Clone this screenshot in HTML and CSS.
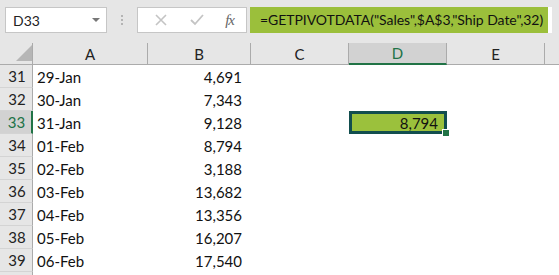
FILE: index.html
```html
<!DOCTYPE html>
<html lang="en">
<head>
  <meta charset="UTF-8">
  <title>GETPIVOTDATA</title>
  <link rel="stylesheet" href="styles.css">
</head>
<body>

  <div class="bar">
    <div class="namebox">
      <span>D33</span>
      <span class="caret"></span>
    </div>
    <div class="dots"><i></i><i></i><i></i></div>
    <div class="buttons">
      <svg width="14" height="14" viewBox="0 0 14 14"><path d="M2 2 L12 12 M12 2 L2 12" stroke="#c4c4c4" stroke-width="1.6" fill="none"/></svg>
      <svg width="16" height="14" viewBox="0 0 16 14"><path d="M2 7 L6 11 L14 2" stroke="#c4c4c4" stroke-width="1.8" fill="none"/></svg>
      <span class="fx">fx</span>
    </div>
    <div class="formula">=GETPIVOTDATA("Sales",$A$3,"Ship Date",32)</div>
  </div>

  <div class="sheet">
    <div class="hd corner"><span class="tri"></span></div>
    <div class="hd col">A</div>
    <div class="hd col">B</div>
    <div class="hd col">C</div>
    <div class="hd col active">D</div>
    <div class="hd col">E</div>
    <div class="hd col last"></div>

    <div class="hd row">31</div><div class="c">29-Jan</div><div class="c num">4,691</div><div class="c"></div><div class="c"></div><div class="c"></div><div class="c"></div>
    <div class="hd row">32</div><div class="c">30-Jan</div><div class="c num">7,343</div><div class="c"></div><div class="c"></div><div class="c"></div><div class="c"></div>
    <div class="hd row active">33</div><div class="c">31-Jan</div><div class="c num">9,128</div><div class="c"></div><div class="c num sel">8,794<span class="handle"></span></div><div class="c"></div><div class="c"></div>
    <div class="hd row">34</div><div class="c">01-Feb</div><div class="c num">8,794</div><div class="c"></div><div class="c"></div><div class="c"></div><div class="c"></div>
    <div class="hd row">35</div><div class="c">02-Feb</div><div class="c num">3,188</div><div class="c"></div><div class="c"></div><div class="c"></div><div class="c"></div>
    <div class="hd row">36</div><div class="c">03-Feb</div><div class="c num">13,682</div><div class="c"></div><div class="c"></div><div class="c"></div><div class="c"></div>
    <div class="hd row">37</div><div class="c">04-Feb</div><div class="c num">13,356</div><div class="c"></div><div class="c"></div><div class="c"></div><div class="c"></div>
    <div class="hd row">38</div><div class="c">05-Feb</div><div class="c num">16,207</div><div class="c"></div><div class="c"></div><div class="c"></div><div class="c"></div>
    <div class="hd row">39</div><div class="c">06-Feb</div><div class="c num">17,540</div><div class="c"></div><div class="c"></div><div class="c"></div><div class="c"></div>
  </div>

</body>
</html>
```

FILE: styles.css
```css
body {
  margin: 0;
  padding: 0;
  width: 559px;
  height: 275px;
  overflow: hidden;
  background: #fff;
  font-family: "Lato", "Open Sans", sans-serif;
}

.bar {
  display: flex;
  align-items: center;
  height: 43px;
  padding: 0 0 3px 5px;
  box-sizing: border-box;
  background: #e6e6e6;
}

.namebox {
  display: flex;
  align-items: center;
  justify-content: space-between;
  width: 102px;
  height: 26px;
  box-sizing: border-box;
  padding: 0 6px 0 7px;
  background: #fff;
  border: 1px solid #c6c6c6;
  font-size: 14px;
  color: #222;
}

.caret {
  width: 0;
  height: 0;
  border-left: 4px solid transparent;
  border-right: 4px solid transparent;
  border-top: 4px solid #777;
}

.dots {
  display: flex;
  flex-direction: column;
  gap: 2px;
  width: 30px;
  align-items: center;
}

.dots i {
  display: block;
  width: 2px;
  height: 2px;
  background: #b4b4b4;
}

.buttons {
  display: flex;
  align-items: center;
  justify-content: space-between;
  width: 110px;
  height: 26px;
  box-sizing: border-box;
  padding: 0 12px 0 16px;
  background: #fff;
  border: 1px solid #c6c6c6;
}

.fx {
  font-family: "Liberation Serif", serif;
  font-style: italic;
  font-size: 15px;
  color: #666;
  letter-spacing: -1px;
}

.formula {
  width: 302px;
  height: 26px;
  margin-left: 3px;
  box-sizing: border-box;
  padding-left: 10px;
  line-height: 26px;
  background: #9bbf3b;
  font-size: 14px;
  letter-spacing: -0.05px;
  color: #111;
  white-space: nowrap;
  border-right: 4px solid #fff;
}

.sheet {
  display: grid;
  grid-template-columns: 33px 115px 103px 98px 98px 98px 14px;
  grid-template-rows: 22px repeat(9, 23px) 3px;
}

.sheet::after {
  content: "";
  background: #e6e6e6;
  border-right: 1px solid #ababab;
}

.hd {
  background: #e6e6e6;
  color: #222;
  font-size: 15px;
  box-sizing: border-box;
  display: flex;
  align-items: center;
  justify-content: center;
}

.hd.col {
  border-right: 1px solid #ababab;
  border-bottom: 1px solid #ababab;
}

.hd.last {
  border-right: 0;
}

.hd.corner {
  border-right: 1px solid #ababab;
  border-bottom: 1px solid #ababab;
  justify-content: flex-end;
  align-items: flex-end;
  padding: 0 0 3px 0;
}

.tri {
  width: 0;
  height: 0;
  border-left: 16px solid transparent;
  border-bottom: 16px solid #b6b6b6;
}

.hd.row {
  border-right: 1px solid #ababab;
  border-bottom: 1px solid #d4d4d4;
  padding-left: 2px;
}

.hd.active {
  background: #d2d2d2;
  color: #217346;
}

.hd.col.active {
  border-bottom: 2px solid #217346;
}

.hd.row.active {
  border-right: 2px solid #217346;
}

.c {
  font-size: 15px;
  color: #111;
  padding: 0 4px;
  display: flex;
  align-items: center;
  white-space: nowrap;
}

.num {
  justify-content: flex-end;
  padding-right: 9px;
}

.sel {
  position: relative;
  background: #9bc13c;
  border: 3px solid #124e4e;
  box-sizing: border-box;
  padding-right: 6px;
}

.handle {
  position: absolute;
  right: -5px;
  bottom: -5px;
  width: 6px;
  height: 6px;
  background: #217346;
  border-left: 1px solid #fff;
  border-top: 1px solid #fff;
}
```
